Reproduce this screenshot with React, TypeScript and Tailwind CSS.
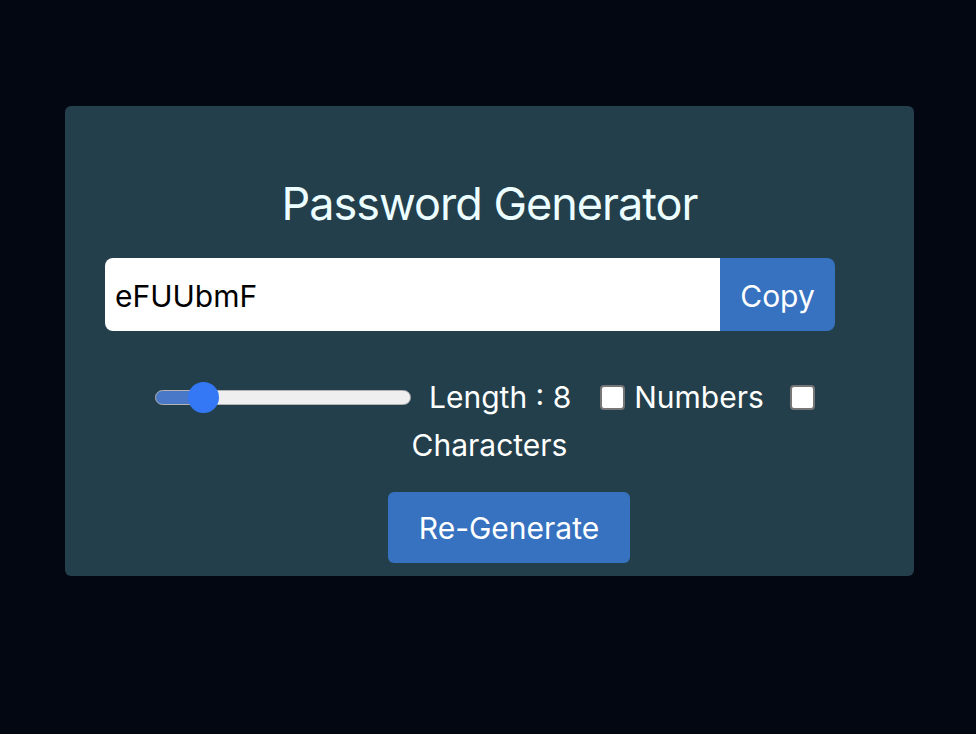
import { useState } from 'react'

export default function App() {
  const [length, setLength] = useState(8)
  const [numbers, setNumbers] = useState(false)
  const [chars, setChars] = useState(false)
  const password = 'eFUUbmF'

  // thumb is 31px on a 256px track, fill runs to its centre
  const fill = 15.5 + ((length - 1) / 49) * (256 - 31)

  return (
    <div className="min-h-screen bg-[#030712] pt-[106px] font-['Inter',sans-serif]">
      <div className="ml-[65px] flex h-[470px] w-[849px] flex-col rounded-[6px] bg-[#233f4b] pt-[73px]">
        <h1 className="text-center text-[45px] leading-[50px] tracking-[-1px] text-[#ecfeff]">
          Password Generator
        </h1>

        <div className="ml-[40px] mt-[29px] flex h-[73px] w-[730px] overflow-hidden rounded-[8px]">
          <input
            type="text"
            value={password}
            readOnly
            className="w-[615px] bg-white px-[10px] pt-[3px] text-[30px] text-black outline-none"
          />
          <button className="w-[115px] bg-[#3672bf] pt-[3px] text-[30px] text-white">
            Copy
          </button>
        </div>

        <div className="mt-[42px] flex h-[48px] items-center pl-[90px] text-[30px] leading-[48px] text-white">
          <input
            type="range"
            min={1}
            max={50}
            value={length}
            onChange={(e) => setLength(Number(e.target.value))}
            style={{
              background: `linear-gradient(to right, #4a78c8 ${fill}px, #efefef ${fill}px)`,
            }}
            className="h-[15px] w-[256px] cursor-pointer appearance-none rounded-full border border-[#b3b3b3] [&::-webkit-slider-thumb]:h-[31px] [&::-webkit-slider-thumb]:w-[31px] [&::-webkit-slider-thumb]:appearance-none [&::-webkit-slider-thumb]:rounded-full [&::-webkit-slider-thumb]:bg-[#3478f6]"
          />
          <label className="ml-[18px]">Length : {length}</label>
          <input
            type="checkbox"
            checked={numbers}
            onChange={() => setNumbers(!numbers)}
            className="ml-[29px] h-[25px] w-[25px] appearance-none rounded-[4px] border-2 border-[#767676] bg-white checked:bg-[#3478f6]"
          />
          <label className="ml-[9px]">Numbers</label>
          <input
            type="checkbox"
            checked={chars}
            onChange={() => setChars(!chars)}
            className="ml-[26px] h-[25px] w-[25px] appearance-none rounded-[4px] border-2 border-[#767676] bg-white checked:bg-[#3478f6]"
          />
        </div>
        <div className="text-center text-[30px] leading-[48px] text-white">
          <label>Characters</label>
        </div>

        <div className="mt-[23px] flex justify-center pl-[39px]">
          <button className="h-[71px] w-[242px] rounded-[6px] bg-[#3672bf] pt-[2px] text-[30px] text-white">
            Re-Generate
          </button>
        </div>
      </div>
    </div>
  )
}
